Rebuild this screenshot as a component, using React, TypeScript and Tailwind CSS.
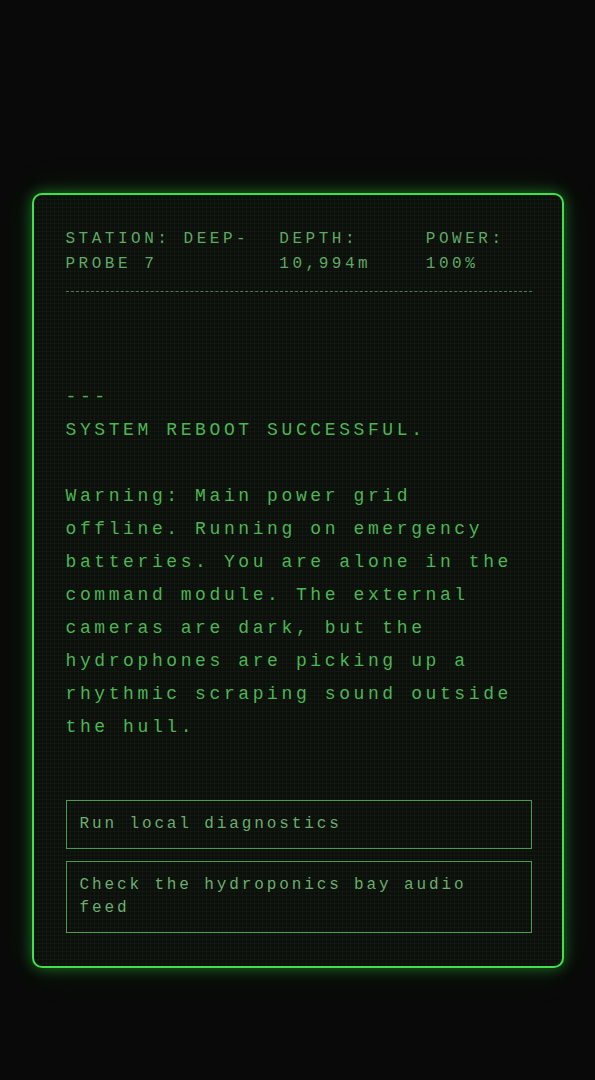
const STORY =
  "\n\n---\nSYSTEM REBOOT SUCCESSFUL.\n\nWarning: Main power grid offline. Running on emergency batteries. You are alone in the command module. The external cameras are dark, but the hydrophones are picking up a rhythmic scraping sound outside the hull.";

const CHOICES = ["Run local diagnostics", "Check the hydroponics bay audio feed"];

export default function App() {
  return (
    <div className="min-h-screen w-full bg-[#090909] flex items-start justify-center pt-[193px] pb-10 font-['Liberation_Mono','Courier_New',monospace]">
      <div className="w-[532px] rounded-[10px] border-2 border-[#3fe04c] bg-[#0c0f0c] bg-[linear-gradient(rgba(80,255,80,0.035)_1px,transparent_1px),linear-gradient(90deg,rgba(80,255,80,0.035)_1px,transparent_1px)] bg-[size:4px_4px] shadow-[0_0_14px_rgba(60,230,70,0.45),0_0_40px_rgba(40,200,50,0.12)] pl-8 pr-[30px] pt-8 pb-[33px]">
        <div className="flex gap-3 border-b border-dashed border-[#4d7d4f] pb-[14px] text-[16px] leading-[25px] tracking-[0.22em] text-[#5fa862]">
          <div>STATION: DEEP-PROBE 7</div>
          <div>DEPTH: 10,994m</div>
          <div>POWER: 100%</div>
        </div>

        <div className="mt-[23px] whitespace-pre-wrap text-[18px] leading-[33px] tracking-[0.2em] text-[#4cb552]">
          {STORY}
        </div>

        <div className="mt-14 flex flex-col gap-3">
          {CHOICES.map((c) => (
            <button
              key={c}
              className="w-full border border-[#4c9a50] px-[13px] py-3 text-left text-[16px] leading-[23px] tracking-[0.18em] text-[#6aad6d]"
            >
              {c}
            </button>
          ))}
        </div>
      </div>
    </div>
  );
}
